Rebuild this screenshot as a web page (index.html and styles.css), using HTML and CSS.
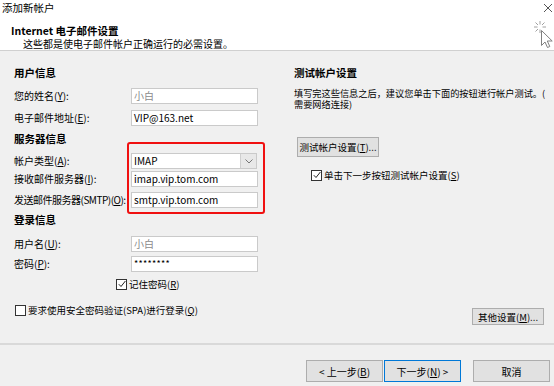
FILE: index.html
```html
<!DOCTYPE html>
<html lang="zh-CN">
<head>
<meta charset="utf-8">
<title>添加新帐户</title>
<link rel="stylesheet" href="styles.css">
</head>
<body>
<div class="page">
  <div class="header">
    <div class="wtitle">添加新帐户</div>
    <div class="htitle">Internet 电子邮件设置</div>
    <div class="hsub">这些都是使电子邮件帐户正确运行的必需设置。</div>
    <svg class="close" width="10" height="10" viewBox="0 0 10 10"><path d="M1 1L9 9M9 1L1 9" stroke="#555" stroke-width="1" fill="none"/></svg>
    <svg class="cursor" width="21" height="29" viewBox="0 0 21 29">
      <g stroke="#a0a0a0" stroke-width="1" fill="none">
        <path d="M7 1V4.5M7 9.5V13M1 7H4.5M9.5 7H13M2.5 2.5L5 5M11.5 2.5L9 5M2.5 11.5L5 9"/>
      </g>
      <path d="M8.5 10.5V25.5L12 22L14.5 27.5L16.8 26.5L14.3 21H19.2Z" fill="#fff" stroke="#808080" stroke-width="1" stroke-linejoin="round"/>
    </svg>
  </div>

  <div class="main">
    <div class="left">
      <div class="sec s-user">用户信息</div>
      <div class="row r-name"><span class="lbl">您的姓名(<u>Y</u>):</span><div class="inp muted">小白</div></div>
      <div class="row r-mail"><span class="lbl">电子邮件地址(<u>E</u>):</span><div class="inp">VIP@163.net</div></div>
      <div class="sec s-server">服务器信息</div>
      <div class="row r-type"><span class="lbl">帐户类型(<u>A</u>):</span>
        <div class="sel"><span class="sel-val">IMAP</span><span class="sel-btn"><svg width="8" height="5" viewBox="0 0 8 5"><path d="M0.5 0.5L4 4L7.5 0.5" stroke="#777" fill="none"/></svg></span></div>
      </div>
      <div class="row r-in"><span class="lbl">接收邮件服务器(<u>I</u>):</span><div class="inp">imap.vip.tom.com</div></div>
      <div class="row r-out"><span class="lbl tight">发送邮件服务器(SMTP)(<u>O</u>):</span><div class="inp">smtp.vip.tom.com</div></div>
      <div class="sec s-login">登录信息</div>
      <div class="row r-user"><span class="lbl">用户名(<u>U</u>):</span><div class="inp muted">小白</div></div>
      <div class="row r-pass"><span class="lbl">密码(<u>P</u>):</span><div class="inp pw">********</div></div>
      <div class="chk r-remember"><span class="box"><svg width="8" height="8" viewBox="0 0 8 8"><path d="M0.8 4.2L3 6.5L7.4 1" stroke="#222" stroke-width="1" fill="none"/></svg></span><span>记住密码(<u>R</u>)</span></div>
      <div class="chk r-spa"><span class="box"></span><span>要求使用安全密码验证(SPA)进行登录(<u>Q</u>)</span></div>
    </div>

    <div class="right">
      <div class="sec">测试帐户设置</div>
      <div class="desc"><span class="line">填写完这些信息之后，建议您单击下面的按钮进行帐户测试。(</span><span class="line">需要网络连接)</span></div>
      <div class="btn btn-test">测试帐户设置(<u>T</u>)...</div>
      <div class="chk r-next"><span class="box"><svg width="8" height="8" viewBox="0 0 8 8"><path d="M0.8 4.2L3 6.5L7.4 1" stroke="#222" stroke-width="1" fill="none"/></svg></span><span>单击下一步按钮测试帐户设置(<u>S</u>)</span></div>
      <div class="btn btn-more">其他设置(<u>M</u>)...</div>
    </div>

    <div class="redbox"></div>
  </div>

  <div class="sep"></div>

  <div class="footer">
    <div class="btn fbtn">&lt; 上一步(<u>B</u>)</div>
    <div class="btn fbtn primary">下一步(<u>N</u>) &gt;</div>
    <div class="btn fbtn cancel">取消</div>
  </div>
</div>
</body>
</html>
```

FILE: styles.css
```css
* { box-sizing: border-box; }
html, body { margin: 0; padding: 0; }
body {
  background: #f0f0f0;
  font-family: "Noto Sans CJK SC", "Noto Sans", sans-serif;
  font-size: 10px;
  color: #000;
  width: 554px;
  height: 386px;
  overflow: hidden;
}
u { text-decoration: underline; text-underline-offset: 1px; }
.page { position: relative; width: 554px; height: 386px; }

.header {
  position: relative;
  background: #fff;
  height: 51px;
  border-bottom: 1px solid #d0d0d0;
  padding-top: 2px;
}
.wtitle { padding-left: 2px; font-size: 10.5px; line-height: 12px; }
.htitle { margin-top: 11px; padding-left: 11px; font-weight: bold; font-size: 10.5px; line-height: 12px; }
.hsub { margin-top: 1px; padding-left: 23px; font-size: 10px; line-height: 12px; }
.close { position: absolute; left: 543px; top: 3px; }
.cursor { position: absolute; left: 533px; top: 20px; }

.main { position: relative; display: flex; height: 292px; }
.left { flex: none; width: 294px; padding-left: 14px; padding-top: 15px; }
.right { flex: 1; min-width: 0; display: flex; flex-direction: column; padding-top: 15px; padding-right: 10px; }

.sec { font-weight: bold; font-size: 10.5px; line-height: 14px; height: 14px; }
.row { display: flex; align-items: center; height: 16px; line-height: 14px; }
.lbl { width: 117px; flex: none; white-space: nowrap; }
.lbl.tight { letter-spacing: -0.5px; }
.inp {
  width: 127px;
  height: 16px;
  background: #fff;
  border: 1px solid #cacaca;
  padding-left: 2px;
  line-height: 14px;
  white-space: nowrap;
  overflow: hidden;
}
.inp.muted { color: #8a8a8a; }
.inp.pw { font-size: 9px; letter-spacing: 0.3px; }

.sel {
  width: 126px;
  height: 16px;
  display: flex;
  background: #fff;
  border: 1px solid #cacaca;
}
.sel-val { flex: 1; padding-left: 2px; line-height: 14px; }
.sel-btn {
  width: 16px;
  background: #e8e8e8;
  border-left: 1px solid #cfcfcf;
  display: flex;
  align-items: center;
  justify-content: center;
}

.r-name { margin-top: 8px; }
.r-mail { margin-top: 6px; }
.s-server { margin-top: 6px; }
.r-type { margin-top: 7px; }
.r-in { margin-top: 2px; }
.r-out { margin-top: 5px; }
.s-login { margin-top: 5px; }
.r-user { margin-top: 9px; }
.r-pass { margin-top: 4px; }

.chk { display: flex; align-items: center; height: 14px; font-size: 9.5px; line-height: 14px; white-space: nowrap; }
.box {
  width: 11px;
  height: 11px;
  flex: none;
  background: #fff;
  border: 1px solid #333;
  margin-right: 2px;
  display: flex;
  align-items: center;
  justify-content: center;
}
.r-remember { margin-top: 5px; margin-left: 102px; }
.r-spa { margin-top: 12px; margin-left: 1px; }

.desc { margin-top: 8px; font-size: 9.2px; line-height: 11px; }
.desc .line { display: block; white-space: nowrap; }
.btn {
  background: #e1e1e1;
  border: 1px solid #adadad;
  display: flex;
  align-items: center;
  justify-content: center;
  white-space: nowrap;
  font-size: 9.5px;
}
.btn-test { margin-top: 27px; margin-left: 3px; width: 82px; height: 20px; }
.r-next { margin-top: 11px; margin-left: 17px; }
.btn-more { margin-top: auto; margin-bottom: 18px; align-self: flex-end; width: 72px; height: 17px; }

.redbox {
  position: absolute;
  left: 127px;
  top: 91px;
  width: 138px;
  height: 72px;
  border: 2.5px solid #f01010;
  border-radius: 3px;
}

.sep { height: 2px; background: #d9d9d9; }

.footer { display: flex; justify-content: flex-end; padding-top: 15px; padding-right: 4px; }
.fbtn { width: 77px; height: 22px; font-size: 10px; }
.fbtn.primary { margin-left: 1px; border-color: #0078d7; }
.fbtn.cancel { margin-left: 12px; }
```
